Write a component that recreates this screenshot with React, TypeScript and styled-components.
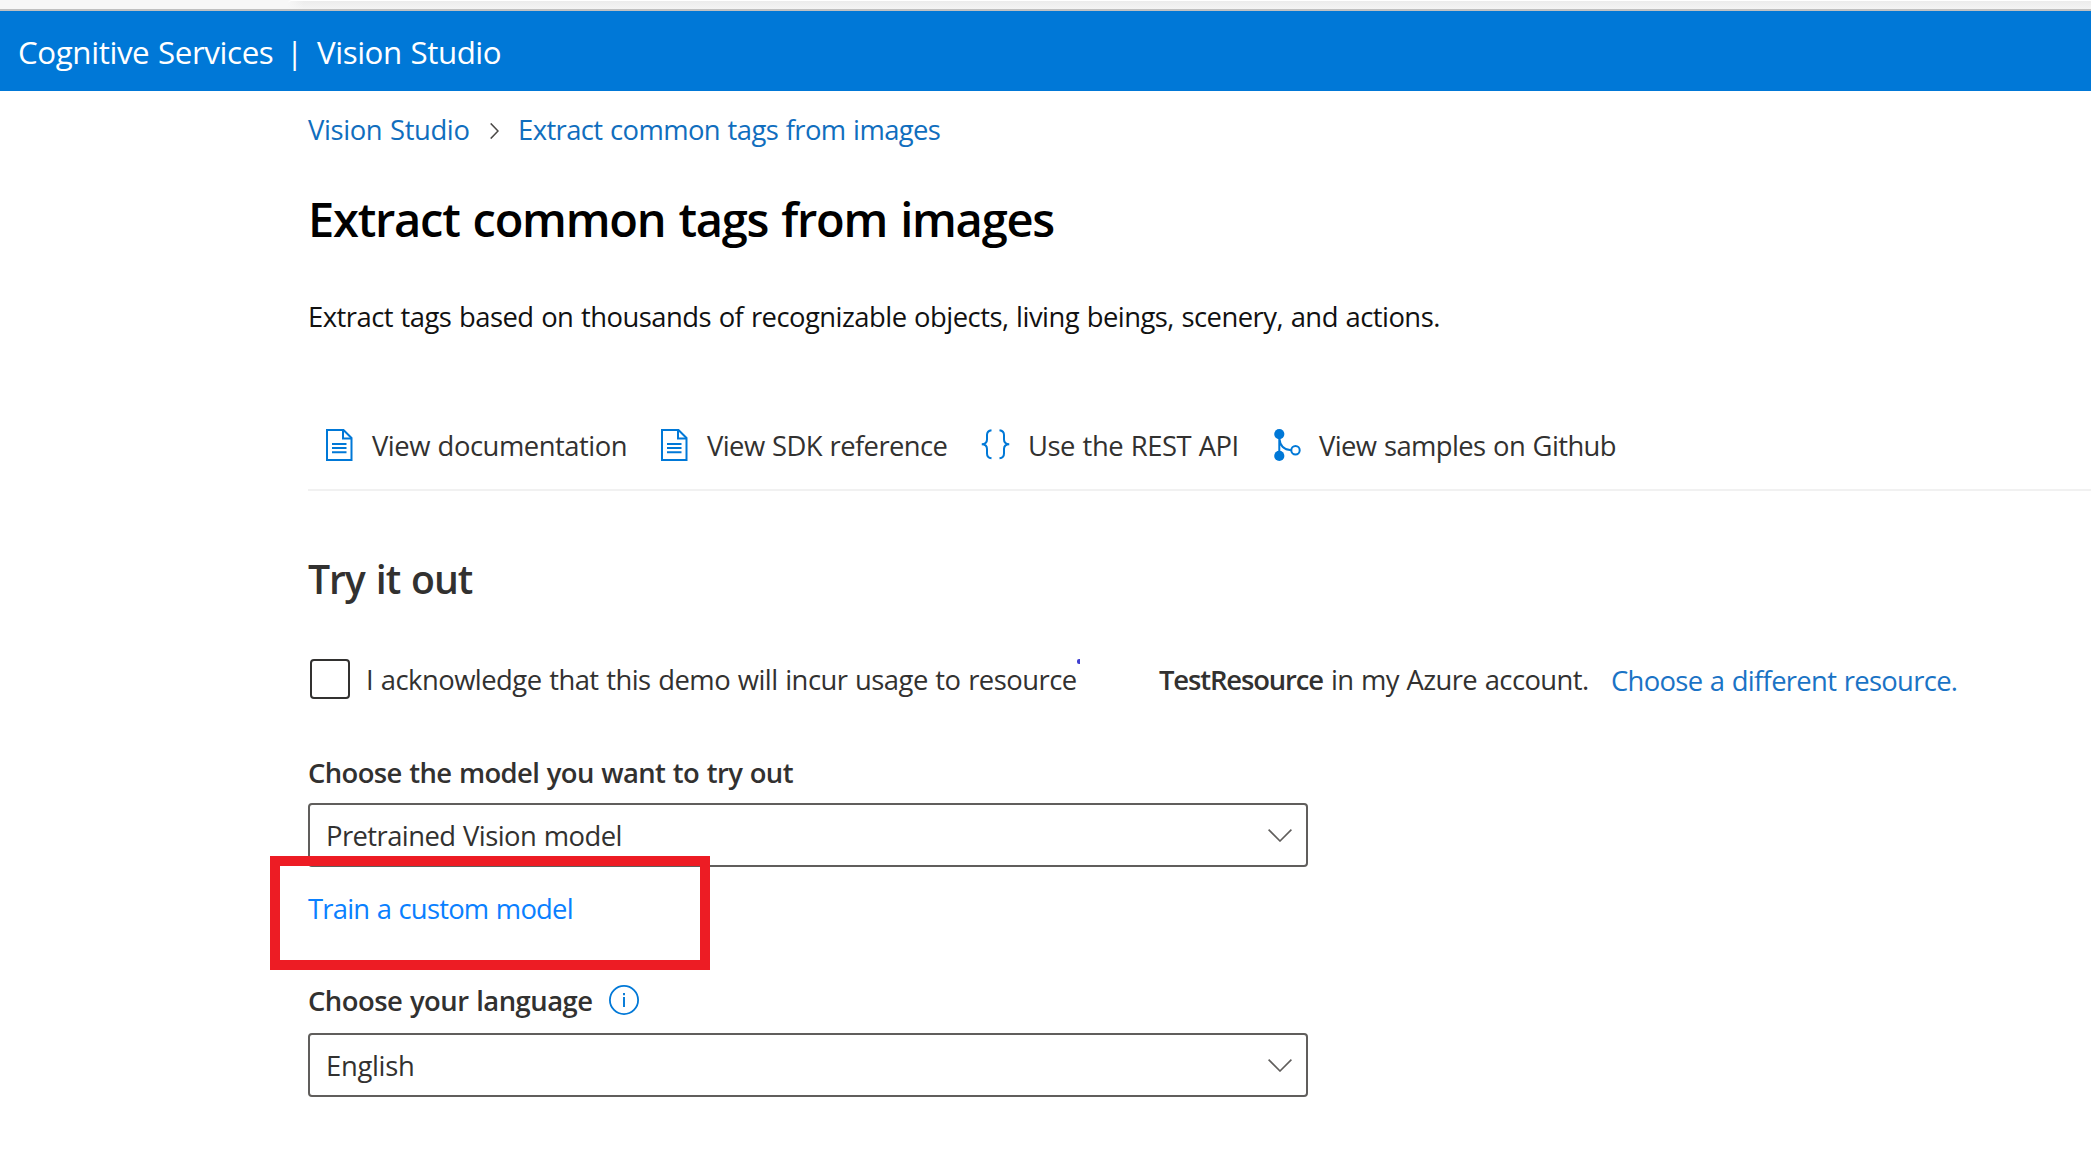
import React from 'react';
import styled, { createGlobalStyle } from 'styled-components';

const GlobalStyle = createGlobalStyle`
  * { box-sizing: border-box; }
  body {
    margin: 0;
    background: #fff;
    font-family: 'Open Sans', 'Noto Sans', sans-serif;
    overflow: hidden;
  }
`;

const Page = styled.div`
  display: flex;
  flex-direction: column;
  height: 1175px;
  overflow: hidden;
  background: #fff;
`;

const BrowserEdge = styled.div`
  height: 11px;
  padding-left: 288px;
  background: #f7f7f7;
  border-bottom: 2px solid #c0c0c0;
`;

const BrowserEdgePanel = styled.div`
  height: 9px;
  border-top: 1px solid #fff;
  border-top-left-radius: 4px;
  background: linear-gradient(90deg, #f7f7f7 0, rgba(247, 247, 247, 0) 16px),
    linear-gradient(180deg, #ececec 0, #f4f4f4 100%);
`;

const Text = styled.span<{ $ls?: number; $w?: number }>`
  display: block;
  flex: none;
  width: ${(p) => (p.$w ? `${p.$w}px` : 'auto')};
  height: 36px;
  font-size: 27.4px;
  line-height: 38px;
  letter-spacing: ${(p) => p.$ls ?? -0.5}px;
  word-spacing: 1px;
  color: #323130;
  white-space: nowrap;
`;

const Header = styled.header`
  display: flex;
  align-items: center;
  height: 80px;
  padding-left: 18px;
  background: #0078d7;
`;

const HeaderText = styled(Text)`
  font-size: 31.3px;
  color: #fff;
`;

const Main = styled.main`
  display: flex;
  flex-direction: column;
  padding: 20px 0 0 308px;
`;

const Breadcrumb = styled.nav`
  display: flex;
  align-items: center;
`;

const Crumb = styled(Text).attrs({ as: 'a' })`
  color: #106ebe;
`;

const CrumbArrow = styled.svg`
  flex: none;
  margin: 4px 19px 0 21px;
`;

const Title = styled.h1`
  margin: 40px 0 0;
  font-size: 47px;
  font-weight: 600;
  line-height: 64px;
  letter-spacing: -1.23px;
  word-spacing: 2px;
  color: #000;
  white-space: nowrap;
`;

const Description = styled(Text).attrs({ as: 'p' })`
  margin: 47px 0 0;
  color: #111;
`;

const Toolbar = styled.div`
  display: grid;
  grid-template-columns: 335px 320px 293px auto;
  height: 64px;
  margin-top: 93px;
  padding-left: 18px;
  border-bottom: 2px solid #f1f1f1;
`;

const Tool = styled.a<{ $gap: number }>`
  display: flex;
  align-items: flex-start;
  gap: ${(p) => p.$gap}px;

  svg {
    flex: none;
    margin-top: 2px;
  }
`;

const SectionTitle = styled.h2`
  margin: 59px 0 0;
  font-size: 39.2px;
  font-weight: 600;
  line-height: 57px;
  height: 56px;
  letter-spacing: -1.1px;
  word-spacing: 2px;
  color: #323130;
`;

const ConsentRow = styled.div`
  display: flex;
  align-items: center;
  height: 40px;
  margin-top: 53px;
  padding-left: 2px;
`;

const Checkbox = styled.span`
  flex: none;
  width: 40px;
  height: 40px;
  margin-right: 16px;
  border: 2px solid #323130;
  border-radius: 4px;
`;

const ConsentText = styled(Text)`
  position: relative;
`;

const InkDot = styled.i`
  position: absolute;
  left: 711px;
  top: -2px;
  width: 3px;
  height: 5px;
  border-radius: 2px 0 0 2px;
  background: #3f3fd0;
`;

const Strong = styled(Text)`
  font-weight: 600;
`;

const ResourceLink = styled(Text).attrs({ as: 'a' })`
  line-height: 40px;
  color: #1a73c5;
`;

const FieldLabel = styled.div<{ $top: number }>`
  display: flex;
  align-items: center;
  gap: 15px;
  height: 36px;
  margin-top: ${(p) => p.$top}px;
`;

const Select = styled.div<{ $top: number }>`
  display: flex;
  align-items: center;
  justify-content: space-between;
  width: 1000px;
  height: 64px;
  margin-top: ${(p) => p.$top}px;
  padding: 0 14px 0 16px;
  border: 2px solid #605e5c;
  border-radius: 4px;
`;

const TrainArea = styled.div`
  position: relative;
  height: 36px;
  margin-top: 23px;
`;

const TrainLink = styled(Text).attrs({ as: 'a' })`
  color: #0a80ff;
`;

const Highlight = styled.div`
  position: absolute;
  left: -38px;
  top: -34px;
  width: 440px;
  height: 114px;
  border: 10px solid #ed1c24;
`;

const DocIcon = () => (
  <svg width="27" height="32" viewBox="0 0 27 32" fill="none" stroke="#0078d7" strokeWidth="2">
    <path d="M1 1H17.5L25.5 9V31H1Z" />
    <path d="M17 1V9.5H25.5" />
    <path d="M6 15H20.5M6 19H20.5M6 23.3H20.5" />
  </svg>
);

const BracesIcon = () => (
  <svg width="29" height="32" viewBox="0 0 29 32" fill="none" stroke="#0078d7" strokeWidth="2">
    <path d="M10.5 1.2C7 1.6 6 3.2 6 6V10.5C6 13.4 4.6 15 .8 15.2C4.6 15.4 6 17 6 19.9V24.5C6 27.3 7 28.9 10.5 29.3" />
    <path d="M18.5 1.2C22 1.6 23 3.2 23 6V10.5C23 13.4 24.4 15 28.2 15.2C24.4 15.4 23 17 23 19.9V24.5C23 27.3 22 28.9 18.5 29.3" />
  </svg>
);

const BranchIcon = () => (
  <svg width="27" height="32" viewBox="0 0 27 32" fill="none" stroke="#0078d7" strokeWidth="2">
    <circle cx="5.3" cy="5.1" r="5.1" fill="#0078d7" stroke="none" />
    <circle cx="5.3" cy="26.9" r="5.1" fill="#0078d7" stroke="none" />
    <path d="M5.3 5V27M5.3 9C6 16.5 9.5 21 17 21.2" />
    <circle cx="21.5" cy="21.2" r="4.2" />
  </svg>
);

const ChevronDown = () => (
  <svg width="24" height="13" viewBox="0 0 24 13" fill="none" stroke="#605e5c" strokeWidth="1.6">
    <path d="M.6.6L12 12L23.4.6" />
  </svg>
);

const InfoIcon = () => (
  <svg width="30" height="30" viewBox="0 0 30 30" fill="none" stroke="#0078d7">
    <circle cx="15" cy="15" r="14.1" strokeWidth="1.8" />
    <path d="M15 12V22M15 8V10.2" strokeWidth="1.9" />
  </svg>
);

export default function App() {
  return (
    <Page>
      <GlobalStyle />
      <BrowserEdge>
        <BrowserEdgePanel />
      </BrowserEdge>
      <Header>
        <HeaderText $w={268} $ls={-0.4}>Cognitive Services</HeaderText>
        <HeaderText $w={31} $ls={0}>|</HeaderText>
        <HeaderText $ls={-0.44}>Vision Studio</HeaderText>
      </Header>
      <Main>
        <Breadcrumb>
          <Crumb $w={161} $ls={-0.37}>Vision Studio</Crumb>
          <CrumbArrow width="9" height="16" viewBox="0 0 9 16" fill="none" stroke="#4a4846" strokeWidth="1.5">
            <path d="M.7.4L8 8L.7 15.6" />
          </CrumbArrow>
          <Crumb $ls={-0.59}>Extract common tags from images</Crumb>
        </Breadcrumb>
        <Title>Extract common tags from images</Title>
        <Description $ls={-0.52}>
          Extract tags based on thousands of recognizable objects, living beings, scenery, and actions.
        </Description>
        <Toolbar>
          <Tool $gap={19}>
            <DocIcon />
            <Text $ls={-0.47}>View documentation</Text>
          </Tool>
          <Tool $gap={19}>
            <DocIcon />
            <Text $ls={-0.58}>View SDK reference</Text>
          </Tool>
          <Tool $gap={18}>
            <BracesIcon />
            <Text $ls={-0.48}>Use the REST API</Text>
          </Tool>
          <Tool $gap={18}>
            <BranchIcon />
            <Text $ls={-0.6}>View samples on Github</Text>
          </Tool>
        </Toolbar>
        <SectionTitle>Try it out</SectionTitle>
        <ConsentRow>
          <Checkbox role="checkbox" aria-checked="false" />
          <ConsentText $w={793} $ls={-0.52}>
            I acknowledge that this demo will incur usage to resource
            <InkDot />
          </ConsentText>
          <Strong $w={172} $ls={-1.12}>TestResource</Strong>
          <Text $w={280} $ls={-0.58}>in my Azure account.</Text>
          <ResourceLink $ls={-0.68}>Choose a different resource.</ResourceLink>
        </ConsentRow>
        <FieldLabel $top={55}>
          <Strong $ls={-0.6}>Choose the model you want to try out</Strong>
        </FieldLabel>
        <Select $top={13}>
          <Text $ls={-0.56}>Pretrained Vision model</Text>
          <ChevronDown />
        </Select>
        <TrainArea>
          <TrainLink $ls={-0.77}>Train a custom model</TrainLink>
          <Highlight />
        </TrainArea>
        <FieldLabel $top={56}>
          <Strong $w={286} $ls={-0.5}>Choose your language</Strong>
          <InfoIcon />
        </FieldLabel>
        <Select $top={15}>
          <Text $ls={-0.3}>English</Text>
          <ChevronDown />
        </Select>
      </Main>
    </Page>
  );
}
